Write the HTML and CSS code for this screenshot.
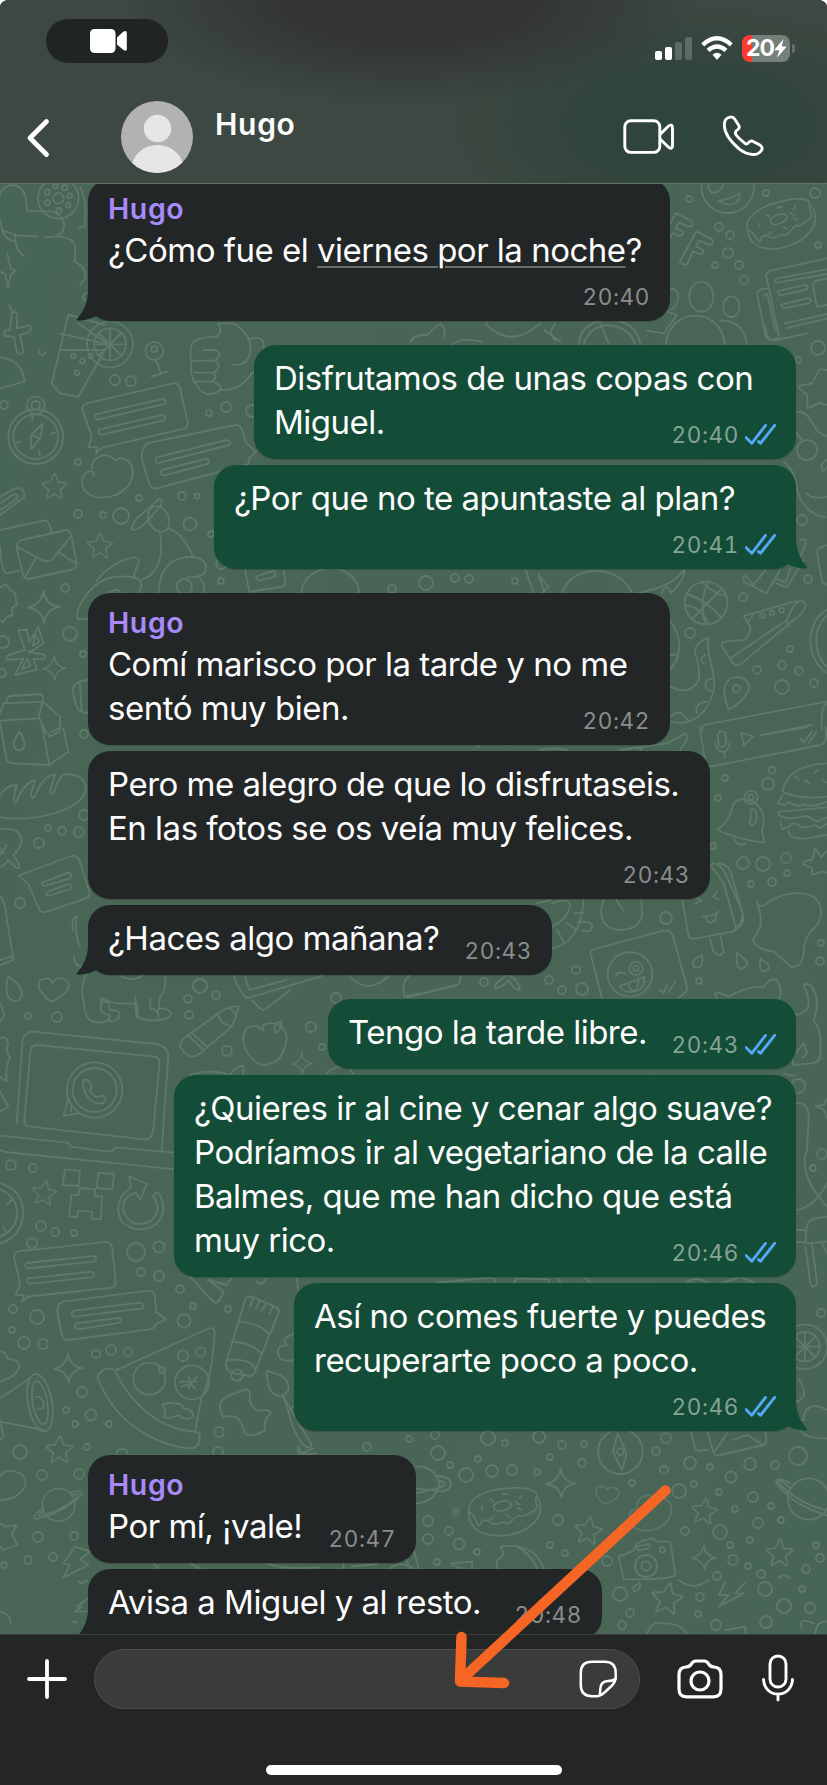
FILE: index.html
```html
<!DOCTYPE html>
<html lang="es">
<head>
<meta charset="utf-8">
<title>Hugo</title>
<link rel="stylesheet" href="styles.css">
</head>
<body>
<svg width="0" height="0" class="defs">
  <symbol id="tail" viewBox="0 0 96 96"><path d="M36 8Q36 52 3 90Q0 95 10 95Q42 93 65 79L80 8Z"/></symbol>
  <symbol id="ticks" viewBox="0 0 92 62"><path d="M3 40L20 57L61 4M40 52L46 57L88 4"/></symbol>
  <symbol id="star" viewBox="-50 -50 100 100"><path d="M0 -44Q3 -46 6 -38L13 -16L42 -12Q46 -10 41 -7L20 11L27 38Q26 42 21 40L0 25L-23 40Q-28 42 -26 35L-19 11L-42 -7Q-45 -12 -39 -13L-14 -16Z"/></symbol>
  <symbol id="spark" viewBox="-50 -50 100 100"><path d="M0 -46Q3 -5 45 0Q5 5 2 44Q-5 7 -44 2Q-6 -7 0 -46Z"/></symbol>
  <symbol id="planet" viewBox="-90 -70 180 140"><circle r="55"/><path d="M-50 12C-90 35 -92 52 -65 46C-20 35 50 0 75 -32C90 -52 55 -48 38 -40M-52 22C-68 32 -73 40 -60 37C-20 28 45 -4 64 -30C70 -40 58 -38 46 -32"/></symbol>
  <symbol id="cloud" viewBox="-80 -70 160 140"><path d="M-48 -20C-55 -55 -5 -75 20 -45C48 -62 80 -35 68 8C52 55 -15 78 -60 52C-90 30 -75 -20 -48 -12Q-38 -8 -45 2"/></symbol>
  <symbol id="heart" viewBox="-50 -50 100 100"><path d="M-7 42Q-45 15 -46 -8C-46 -32 -12 -34 -3 -15C6 -38 48 -34 47 -8Q40 22 -7 42Z"/></symbol>
  <symbol id="donut" viewBox="-120 -85 240 170"><path d="M-110 0C-115 -40 -60 -70 20 -72C80 -76 105 -62 100 -45C88 -28 115 -15 90 0C72 4 65 20 50 14C35 6 22 42 5 36C-10 25 -25 48 -40 36Q-62 15 -76 42C-88 48 -82 15 -110 0ZM-110 0C-115 92 25 90 80 45C115 20 120 -20 100 -45M-70 -15V-5M-42 -38L-34 -30M-5 -54H12M55 -50L48 -40M35 -30L46 -22M-35 18L-44 24M5 10L15 18M52 -5L42 -12"/><ellipse cx="-2" cy="-18" rx="28" ry="15" transform="rotate(-12)"/></symbol>
  <symbol id="chat" viewBox="-170 -100 340 200"><path d="M-155 -52Q-155 -70 -135 -70H125Q145 -70 145 -50V50Q145 70 125 70H-125L-145 85L-138 65L-162 60L-145 30ZM-120 -32H90Q98 -20 88 -15H-118Q-128 -24 -120 -32ZM-120 15H78Q86 27 76 32H-118Q-128 23 -120 15Z"/></symbol>
</svg>

<div class="phone">
  <header class="top">
    <div class="status">
      <div class="pill"><svg width="38" height="26" viewBox="0 0 38 26" fill="#fff"><rect x="1" y="1" width="25.5" height="24" rx="4.5"/><path d="M28 9.5L34.5 3.6Q37.8 2 37.8 5V21Q37.8 24 34.5 22L28 16.5Z"/></svg></div>
      <div class="signals">
        <svg width="38" height="26" viewBox="0 0 38 26" fill="#fff"><rect x="1" y="16" width="7" height="9" rx="2"/><rect x="11" y="12" width="7" height="13" rx="2"/><g opacity=".2"><rect x="21" y="7" width="7" height="18" rx="2"/><rect x="31" y="2" width="7" height="23" rx="2"/></g></svg>
        <svg class="wifi" width="32" height="26" viewBox="0 0 32 26" fill="none" stroke="#fff" stroke-width="4.3"><path d="M1.7 9.8Q16 -3.2 30.3 9.8M7 15.4Q16 7.4 25 15.4"/><path d="M11.5 19.7Q16 16 20.5 19.7L16.6 24.3Q16 25 15.4 24.3Z" fill="#fff" stroke="none"/></svg>
        <div class="battery"><span>20</span><svg width="13" height="19" viewBox="0 0 13 19" fill="#fff"><path d="M9.5 0L.7 10.5Q.3 11.3 1.2 11.3H5.3L3 18.7L12.2 8.2Q12.6 7.4 11.7 7.4H7.7Z"/></svg></div>
        <i class="cap"></i>
      </div>
    </div>
    <div class="nav">
      <svg class="back" width="26" height="42" viewBox="0 0 26 42"><path d="M22.5 4.5L6 21L22.5 37.5"/></svg>
      <svg class="avatar" width="72" height="72" viewBox="0 0 72 72"><clipPath id="face"><circle cx="36" cy="36" r="36"/></clipPath><g clip-path="url(#face)"><rect width="72" height="72" fill="#b2b2b2"/><circle cx="36.5" cy="27.5" r="13.7" fill="#e6e6e6"/><ellipse cx="36.5" cy="68" rx="26" ry="24" fill="#e6e6e6"/></g></svg>
      <h1>Hugo</h1>
      <svg class="video" width="52" height="36" viewBox="0 0 52 36"><rect x="1.8" y="1.8" width="35" height="31.6" rx="6"/><path d="M37 15.5L45.3 7.2Q49.5 4.3 49.5 9V27Q49.5 31 45.3 28L37 20"/></svg>
      <svg class="call" width="42" height="42" viewBox="947 348 126 126"><path d="M957 363C963 354 979 350 985 360L998 380Q1001 387 994 392Q986 397 987 404Q992 414 1017 434Q1023 437 1027 430Q1034 423 1042 428L1062 439Q1072 447 1064 456C1052 473 1023 468 1001 452C977 432 955 405 954 380Q954 369 957 363Z"/></svg>
    </div>
  </header>

  <main class="chat">
    <svg class="wallpaper" width="827" height="1451" viewBox="0 183 827 1451">
      <g class="dots">
        <circle cx="689" cy="199" r="3"/><circle cx="766" cy="193" r="3"/><circle cx="815" cy="193" r="5"/><circle cx="719" cy="227" r="4"/><circle cx="730" cy="235" r="4"/><circle cx="728" cy="253" r="5"/><circle cx="715" cy="265" r="3"/><circle cx="739" cy="265" r="4"/><circle cx="744" cy="280" r="4"/><circle cx="818" cy="245" r="3"/>
        <circle cx="115" cy="380" r="5"/><circle cx="131" cy="381" r="5"/><circle cx="4" cy="405" r="4"/><circle cx="226" cy="407" r="5"/><circle cx="209" cy="413" r="3"/><circle cx="252" cy="411" r="6"/><circle cx="78" cy="462" r="3"/><circle cx="139" cy="498" r="3"/><circle cx="182" cy="496" r="4"/><circle cx="197" cy="496" r="2.5"/><circle cx="78" cy="514" r="4"/><circle cx="103" cy="515" r="3"/><circle cx="121" cy="516" r="8"/><circle cx="190" cy="524" r="6.5"/><circle cx="211" cy="534" r="3"/><circle cx="65" cy="588" r="4"/><circle cx="221" cy="581" r="3"/><circle cx="221" cy="564" r="5"/><circle cx="70" cy="634" r="7"/><circle cx="3" cy="642" r="6"/><circle cx="83" cy="654" r="3"/><circle cx="2" cy="673" r="4"/><circle cx="392" cy="589" r="4"/>
        <circle cx="818" cy="348" r="7"/><circle cx="798" cy="360" r="3"/><circle cx="807" cy="450" r="10"/><circle cx="802" cy="520" r="5"/><circle cx="426" cy="583" r="7"/><circle cx="455" cy="578" r="4"/><circle cx="469" cy="579" r="4"/><circle cx="515" cy="581" r="3"/><circle cx="743" cy="597" r="4"/><circle cx="808" cy="579" r="4"/><circle cx="690" cy="633" r="5"/><circle cx="790" cy="649" r="3"/><circle cx="757" cy="670" r="4"/><circle cx="782" cy="665" r="4"/><circle cx="799" cy="671" r="4"/><circle cx="782" cy="687" r="7"/><circle cx="814" cy="683" r="4"/>
        <circle cx="84" cy="734" r="4"/><circle cx="84" cy="815" r="5"/><circle cx="48" cy="828" r="3"/><circle cx="62" cy="831" r="4"/><circle cx="79" cy="832" r="5"/><circle cx="39" cy="843" r="5"/><circle cx="20" cy="903" r="5"/><circle cx="200" cy="986" r="7"/><circle cx="188" cy="999" r="4"/><circle cx="216" cy="995" r="4"/><circle cx="189" cy="1015" r="4"/><circle cx="28" cy="1016" r="3"/><circle cx="57" cy="1017" r="5"/><circle cx="311" cy="1027" r="5"/><circle cx="336" cy="998" r="5"/><circle cx="227" cy="1051" r="5"/><circle cx="322" cy="1047" r="3"/>
        <circle cx="725" cy="778" r="3"/><circle cx="772" cy="770" r="3.5"/><circle cx="768" cy="784" r="6"/><circle cx="718" cy="798" r="3"/><circle cx="713" cy="846" r="3"/><circle cx="743" cy="863" r="6"/><circle cx="763" cy="864" r="7"/><circle cx="786" cy="858" r="5"/><circle cx="751" cy="884" r="3"/><circle cx="772" cy="882" r="4"/><circle cx="787" cy="873" r="3"/><circle cx="666" cy="918" r="6"/><circle cx="576" cy="970" r="4"/><circle cx="549" cy="980" r="4"/><circle cx="562" cy="990" r="4"/><circle cx="582" cy="989" r="6"/><circle cx="484" cy="982" r="4"/><circle cx="699" cy="981" r="3"/><circle cx="821" cy="943" r="3"/><circle cx="820" cy="961" r="4"/><circle cx="798" cy="1086" r="7"/>
        <circle cx="11" cy="1165" r="5"/><circle cx="33" cy="1168" r="4"/><circle cx="41" cy="1226" r="5"/><circle cx="55" cy="1232" r="4"/><circle cx="74" cy="1233" r="3"/><circle cx="32" cy="1243" r="5"/><circle cx="136" cy="1252" r="9"/><circle cx="159" cy="1247" r="5.5"/><circle cx="141" cy="1272" r="4"/><circle cx="159" cy="1276" r="5"/><circle cx="180" cy="1289" r="4"/><circle cx="193" cy="1306" r="3"/><circle cx="184" cy="1321" r="6.5"/><circle cx="228" cy="1309" r="3"/><circle cx="13" cy="1309" r="4"/><circle cx="37" cy="1317" r="7"/><circle cx="12" cy="1330" r="3"/><circle cx="24" cy="1343" r="6"/><circle cx="43" cy="1344" r="5"/><circle cx="96" cy="1354" r="4"/><circle cx="111" cy="1350" r="5"/><circle cx="128" cy="1352" r="4"/><circle cx="82" cy="1392" r="5"/><circle cx="66" cy="1410" r="3"/><circle cx="91" cy="1415" r="5.5"/><circle cx="75" cy="1424" r="3"/><circle cx="109" cy="1424" r="3"/><circle cx="219" cy="1432" r="5"/><circle cx="822" cy="1154" r="5"/><circle cx="813" cy="1168" r="3"/><circle cx="821" cy="1313" r="4"/>
        <circle cx="488" cy="1438" r="7"/><circle cx="539" cy="1437" r="6"/><circle cx="435" cy="1435" r="4"/><circle cx="505" cy="1443" r="3"/><circle cx="666" cy="1438" r="5"/><circle cx="20" cy="1452" r="7"/><circle cx="87" cy="1447" r="3"/><circle cx="42" cy="1475" r="5"/><circle cx="79" cy="1474" r="5"/><circle cx="38" cy="1537" r="5"/><circle cx="74" cy="1536" r="4"/><circle cx="28" cy="1560" r="4"/><circle cx="53" cy="1557" r="4"/><circle cx="4" cy="1565" r="3"/><circle cx="367" cy="1447" r="4"/><circle cx="409" cy="1439" r="3"/><circle cx="218" cy="1452" r="5"/><circle cx="122" cy="1455" r="6"/>
        <circle cx="562" cy="1445" r="4"/><circle cx="584" cy="1444" r="3"/><circle cx="438" cy="1453" r="7"/><circle cx="550" cy="1457" r="3"/><circle cx="450" cy="1465" r="3"/><circle cx="478" cy="1459" r="3"/><circle cx="466" cy="1475" r="7"/><circle cx="492" cy="1471" r="6"/><circle cx="512" cy="1470" r="5"/><circle cx="537" cy="1472" r="3"/><circle cx="582" cy="1463" r="4"/><circle cx="656" cy="1451" r="4"/><circle cx="664" cy="1470" r="4"/><circle cx="690" cy="1463" r="6"/><circle cx="710" cy="1467" r="3"/><circle cx="750" cy="1464" r="6"/><circle cx="775" cy="1465" r="4"/><circle cx="798" cy="1456" r="9"/><circle cx="731" cy="1477" r="5.5"/><circle cx="632" cy="1483" r="3"/><circle cx="679" cy="1491" r="7"/><circle cx="694" cy="1484" r="3"/><circle cx="719" cy="1492" r="3"/><circle cx="753" cy="1497" r="5"/><circle cx="735" cy="1509" r="3"/><circle cx="771" cy="1506" r="3"/><circle cx="758" cy="1523" r="5"/><circle cx="781" cy="1520" r="3"/><circle cx="456" cy="1512" r="2.5"/><circle cx="428" cy="1521" r="5"/><circle cx="449" cy="1531" r="4"/><circle cx="428" cy="1539" r="5"/><circle cx="459" cy="1544" r="5.5"/><circle cx="558" cy="1520" r="5"/><circle cx="477" cy="1552" r="3"/><circle cx="437" cy="1562" r="3"/><circle cx="550" cy="1545" r="3"/><circle cx="565" cy="1553" r="3"/><circle cx="607" cy="1561" r="5"/><circle cx="685" cy="1531" r="4"/><circle cx="720" cy="1532" r="7"/><circle cx="730" cy="1545" r="3"/><circle cx="750" cy="1540" r="3"/><circle cx="733" cy="1560" r="5"/><circle cx="748" cy="1566" r="3"/><circle cx="717" cy="1576" r="4"/><circle cx="761" cy="1574" r="4"/><circle cx="816" cy="1545" r="3"/><circle cx="820" cy="1558" r="4"/><circle cx="806" cy="1569" r="4"/><circle cx="620" cy="1594" r="7"/><circle cx="765" cy="1589" r="7"/><circle cx="802" cy="1589" r="3"/><circle cx="700" cy="1597" r="4"/><circle cx="784" cy="1606" r="7"/><circle cx="810" cy="1608" r="5"/><circle cx="698" cy="1614" r="3"/><circle cx="630" cy="1613" r="4"/><circle cx="622" cy="1625" r="4"/><circle cx="716" cy="1625" r="5"/><circle cx="766" cy="1622" r="6"/>
      </g>
      <g transform="scale(.33333)">
        <circle cx="175" cy="595" r="61"/><circle cx="175" cy="595" r="16"/><circle cx="142" cy="577" r="8"/><circle cx="166" cy="559" r="7"/><circle cx="194" cy="563" r="8"/><circle cx="209" cy="587" r="7"/><circle cx="205" cy="616" r="7"/><circle cx="177" cy="632" r="8"/><circle cx="142" cy="608" r="8"/>
        <path d="M0 585C10 545 70 540 78 600L82 632L165 635M168 640Q200 660 190 690Q175 715 135 711M110 709L50 706L5 690M0 660Q10 725 45 722M46 706Q45 755 72 768M170 709Q230 710 226 755L224 785Q260 800 256 835L240 855M240 560Q262 600 254 680L235 683M260 880Q240 885 254 900M28 915Q32 935 44 933M22 760L32 805L47 812L33 822L24 862L15 822L0 815"/>
      </g>
      <g transform="translate(407 0) scale(.33333)">
        <circle cx="962" cy="560" r="79"/><path d="M935 602Q970 598 998 580Q1000 610 970 614Q945 612 935 602ZM905 550Q900 580 925 578Q945 570 950 552"/>
        <use href="#donut" x="1010" y="588" width="225" height="170" transform="rotate(-10 1120 670)"/>
        <path id="ef" d="M868 694L915 718Q920 725 914 734L904 734L876 722L867 740L890 750Q890 762 878 762L858 754L842 790Q836 800 818 786Z"/><use href="#ef" x="-61" y="-55"/>
        <ellipse cx="883" cy="890" rx="36" ry="45"/><ellipse cx="973" cy="920" rx="25" ry="31"/><circle cx="865" cy="1035" r="88"/><path d="M790 865Q820 870 813 900Q805 925 792 928M780 935L810 945L770 1000L720 992M940 962Q1010 960 1020 1035M1260 775L1090 812Q1072 818 1080 838L1118 1018M1260 808L1110 835Q1095 845 1110 848L1260 822M1112 874L1196 854Q1208 862 1195 870L1118 886ZM1122 914L1206 894Q1218 902 1205 910L1128 926ZM1134 970L1260 942M1140 984L1260 956M1260 836L1225 843Q1215 850 1220 870L1230 920L1260 915M1080 866Q1045 865 1052 890L1075 1005Q1085 1030 1110 1015M1070 888Q1080 870 1085 900L1105 990"/>
      </g>
      <g transform="translate(0 330) scale(.33333)">
        <path d="M35 -50Q50 -60 52 -45L50 -5L88 -14Q98 0 85 7L60 15L70 65Q60 80 50 65L42 20L15 18Q5 0 30 0ZM115 58Q115 75 130 76L138 66M0 82Q68 90 74 155L0 175M205 -45L155 160L180 190L235 200L315 60L185 60M180 10L325 43L235 -20M208 -45L315 -15"/><circle cx="330" cy="43" r="69"/><circle cx="330" cy="43" r="48"/><path d="M330 -5V91M282 43H378M296 9L364 77M364 9L296 77"/><circle cx="220" cy="79" r="7"/><circle cx="247" cy="93" r="7"/><circle cx="272" cy="79" r="7"/><circle cx="231" cy="128" r="7"/>
        <circle cx="463" cy="63" r="27"/><circle cx="463" cy="57" r="9"/><path d="M468 91L483 130M455 140L502 125M610 60H650Q668 75 645 92Q670 110 640 128Q655 145 635 155Q670 165 660 180Q630 205 600 180L580 150Q570 120 575 100Q565 60 580 35Q610 20 650 20Q670 5 655 -20L700 -20Q770 25 745 85Q730 110 698 103M580 92H645M585 128H640M585 155H635M660 180Q720 185 755 130M745 30Q800 10 790 60L760 130"/>
        <circle cx="107" cy="320" r="82"/><circle cx="107" cy="320" r="67"/><circle cx="107" cy="226" r="27"/><circle cx="107" cy="226" r="13"/><path d="M128 282L93 315V358L120 325ZM93 315L120 325M97 260V272M120 378L118 364M48 338L62 334M165 308L152 312"/>
        <use href="#chat" x="235" y="157" width="350" height="200" transform="rotate(-13 410 257)"/>
        <path d="M440 340L705 285Q722 282 728 305L738 338L768 366L748 382L745 402L470 475Q455 478 448 462L425 385Q425 355 440 340ZM470 382L680 330Q695 335 688 345L480 398Q462 400 470 382ZM485 420L620 386Q632 392 622 402L495 436Q478 438 485 420Z"/>
        <use href="#cloud" x="243" y="365" width="165" height="145"/><use href="#star" x="119" y="427" width="88" height="86"/><use href="#star" x="257" y="605" width="85" height="85"/>
        <path d="M0 500L45 475Q78 470 72 502L0 555M0 520L40 493Q58 490 50 507L0 540M0 600L130 572Q150 570 155 610M0 650Q5 725 20 730L58 722M65 630L200 600Q212 602 215 620L230 700Q230 718 210 720L85 747Q70 745 68 730L50 655Q50 635 65 630ZM52 650L125 690Q140 697 155 690L212 620M75 742L107 685M228 700L178 668M395 590L410 565L480 505Q492 510 480 530L440 575Q420 595 405 600Q395 600 395 590ZM480 612Q495 700 445 740L418 752M505 595Q550 610 578 678M475 790Q480 700 540 685Q610 670 618 710Q620 745 560 742M290 752Q340 690 405 682Q425 685 410 710L400 745M418 788Q440 740 380 740Q290 730 240 825Q225 860 235 868L265 865M320 790Q360 770 360 790M600 745Q620 770 610 790"/><ellipse cx="476" cy="567" rx="30" ry="40" transform="rotate(-25 476 567)"/><circle cx="553" cy="770" r="23"/>
        <use href="#spark" x="76" y="775" width="110" height="112"/><use href="#spark" x="122" y="975" width="82" height="80"/>
        <path d="M0 772L18 762L30 780L45 790L50 825L35 835L38 855L20 860L10 877L0 870M55 900L80 900L88 935L115 892L130 940L100 960L85 965L135 975Q138 990 120 988L100 985L110 1018L45 1035L70 985L20 990Q15 975 35 972L75 960ZM105 915L118 935L98 948ZM82 985L92 1008L65 1018ZM735 720L748 785L848 770Q860 765 855 750L852 722M768 740L820 722Q830 730 825 740L775 752ZM903 790C915 690 1070 690 1078 790M20 1120V1105L30 1098L125 1092Q130 1100 128 1115L10 1120L0 1150M128 1115L180 1160V1200M128 1115L115 1165L0 1172M118 1165L140 1210M264 1050Q215 1055 218 1085L230 1130Q240 1150 264 1148M240 1060L245 1145"/>
      </g>
      <g transform="translate(407 330) scale(.33333)">
        <path d="M10 35Q25 10 60 15L100 -20Q120 0 110 20M135 45Q155 20 225 35M235 -20Q310 60 400 -20M515 45Q520 -25 600 -30Q690 -30 700 45M530 45Q545 -10 600 -15Q670 -10 685 45M575 -30L605 40M412 0L460 35M445 -20Q420 10 445 30M1075 -10Q1080 40 1110 30L1200 10M1260 120L1237 118L1215 160L1175 168Q1180 185 1200 192L1202 235L1240 218L1260 225M1167 245C1220 240 1210 310 1260 318M1170 310L1185 330M1130 395Q1165 420 1170 480Q1190 550 1255 562M1260 410Q1240 440 1245 400L1260 388M1200 490Q1215 510 1260 500M1180 630Q1200 620 1195 645L1180 680M1260 645L1235 655Q1228 660 1232 680L1245 755L1260 765M1015 735L1040 765L1075 720M1010 740L1010 755L1078 790L1120 720M1108 760L1140 772L1190 690M1108 745L1135 758L1150 715"/>
        <circle cx="897" cy="819" r="64"/><path d="M840 792Q900 810 945 865M945 775Q900 820 855 868M905 755Q875 810 895 883M835 825Q880 830 905 883M885 757Q920 790 960 800"/>
        <path d="M1010 858L1150 818Q1190 805 1197 825Q1190 850 1160 870L1000 1003Q990 1010 980 1002L945 950Q940 938 955 935L1010 930Q1030 920 1030 890ZM970 985L1140 870Q1160 820 1175 815M1020 880L1040 852M1138 872L1148 890"/><circle cx="1066" cy="857" r="7"/><circle cx="1095" cy="849" r="7"/><circle cx="1124" cy="841" r="7"/>
        <path d="M1260 838Q1210 870 1210 935Q1215 1000 1260 1030M1260 855Q1225 890 1228 935Q1232 990 1260 1010M790 875C830 920 820 990 790 1015M790 975Q820 970 810 990L790 1020M790 1070Q850 1100 875 1050Q880 1020 865 970Q860 940 905 922C890 1000 960 1050 890 1145Q850 1190 790 1175M792 1160Q820 1130 845 1175M870 1150Q860 1120 900 1115M918 1085Q885 1080 900 1050L915 1045M892 1000Q870 990 895 975"/>
        <path d="M965 1138Q945 1090 955 1065C975 1020 1040 1045 1023 1085Q1005 1120 965 1138Z"/><circle cx="988" cy="1076" r="11"/>
        <path d="M355 718L380 790M395 735L425 770L380 815M395 735L412 785M465 790C490 700 640 700 675 790M690 790Q800 770 832 718Q835 750 790 790M765 790Q775 755 790 785M885 1200Q885 1185 900 1183L1260 1115M1065 1215L1215 1185M1245 1200Q1240 1130 1260 1120"/>
      </g>
      <g transform="translate(0 730) scale(.33333)">
        <path d="M0 -20L20 90Q25 100 40 100L148 105L205 65L190 -5M148 105L125 -20M148 20Q145 10 155 5L178 -5M148 20L178 5M58 5C45 25 38 40 42 50C52 70 78 60 73 38Q70 18 58 5ZM0 195Q20 165 50 165L40 210Q45 225 52 210Q70 160 105 150L92 195Q98 210 105 198Q130 135 165 133L150 185Q155 200 162 185Q175 145 190 133Q255 130 257 175C255 240 100 280 0 262M0 298Q60 290 65 330Q60 360 40 375L58 405Q60 420 45 410L25 390Q10 410 0 410M20 345L0 375M0 355L12 370M55 437L85 462L118 540Q125 550 140 545L258 505Q272 498 268 485L238 390Q230 375 215 378ZM125 458L205 428Q220 430 210 445L135 468Q125 468 125 458ZM138 488L205 462Q220 465 210 477L145 498Q138 498 138 488ZM0 500Q12 510 15 530L40 690L0 705M38 680L0 690"/>
        <path d="M25 740Q15 770 22 795C35 820 65 820 66 790Q60 760 25 740ZM0 820Q15 850 12 860L0 875M230 560Q215 560 218 600M228 560Q225 620 240 650M222 680Q225 710 245 710M258 735Q240 780 250 810Q255 870 280 875Q325 885 330 855Q315 855 302 840L305 805Q340 825 405 820L410 860Q450 880 500 865Q525 850 500 838Q485 830 475 840L480 800Q500 780 495 735M302 815Q330 810 328 840Q370 840 355 865Q340 880 325 870M405 800L415 855M450 805L452 835Q480 840 475 865M358 735Q395 760 430 735"/>
        <use href="#heart" x="108" y="725" width="105" height="98" transform="rotate(2 160 774)"/>
        <path d="M545 930L655 850Q690 825 715 830Q710 860 695 890L600 970Q585 985 560 975L540 950ZM655 850Q658 885 695 888M563 915L610 960M575 908L620 950M690 835L708 855M700 735Q720 790 740 805L960 740L970 735M735 740L748 780L860 750M755 810L780 835Q790 845 800 835L870 780M1045 735Q1100 800 1170 735M1230 735Q1200 760 1215 800L1260 790"/>
        <path d="M790 885C820 870 870 890 858 940C850 975 830 1000 810 1000Q790 1010 770 998C730 970 720 920 740 895Q765 880 790 900ZM828 910Q815 880 845 875Q845 900 828 910Z"/><use href="#spark" x="870" y="965" width="72" height="72"/>
        <path d="M50 1180L68 930Q75 905 100 905L470 942Q505 950 505 980L485 1260M72 1180L92 960Q95 945 110 945L465 980Q480 985 478 1000L460 1200Q455 1230 435 1228L90 1190Q72 1190 75 1170"/><circle cx="284" cy="1080" r="83"/><circle cx="284" cy="1080" r="66"/><path d="M205 1108L190 1158L235 1150M215 1125L212 1145"/><path d="M250 1050Q262 1042 275 1070L270 1082Q280 1100 292 1102Q305 1090 318 1105Q315 1125 290 1120Q245 1100 250 1050ZM0 925Q20 915 25 940Q15 960 30 985Q15 1010 20 1055L0 1040M0 1085L25 1130L0 1145M570 1035Q630 1015 690 1035Q710 1005 730 1008L730 1032M980 1030Q1030 990 1060 1030"/>
      </g>
      <g transform="translate(407 730) scale(.33333)">
        <path d="M210 50Q240 30 300 45M400 60Q440 50 480 60M640 60L780 40L835 10Q850 20 820 60M700 60L730 30M878 -10L895 100Q900 112 920 108L1240 45Q1258 40 1258 15L1255 -10M1062 15L1200 -8M1003 8L1040 20L1010 45ZM1180 25L1190 38L1215 5M1205 38L1228 5M932 15Q940 -5 955 10L958 40Q945 60 935 45ZM925 40Q930 70 955 65Q970 50 968 35M950 68L954 82"/>
        <path d="M930 300Q970 270 975 235Q985 200 1020 210C1060 215 1080 260 1065 300L1072 338Q1000 330 930 300ZM980 325Q990 350 1015 340M1030 240Q1045 230 1050 260Q1045 285 1035 288Q1022 280 1032 265Z"/><circle cx="1032" cy="202" r="20"/><circle cx="1032" cy="202" r="8"/>
        <path d="M1260 100Q1140 105 1127 185Q1180 210 1260 200M1127 195L1112 220Q1140 230 1145 215Q1170 235 1190 222Q1210 235 1260 215M1115 245L1260 232M1115 245Q1105 260 1150 265L1200 258L1230 275L1260 262M1120 275L1125 298L1145 290Q1160 270 1180 290Q1200 295 1225 285L1240 295L1260 280M1145 300Q1145 330 1200 325L1260 315M1165 140L1175 150M1195 150L1210 162M1222 130L1232 120M1245 150L1258 158"/>
        <path d="M1260 362L1242 382L1225 355L1215 390Q1190 390 1188 402L1215 415V435L1245 425L1260 428M825 505L845 620Q850 628 870 625L975 605Q990 600 985 585L950 460L910 405M915 400Q940 400 955 430L1005 540Q1010 585 985 590M935 400Q970 405 975 440L1010 560Q1010 590 975 605M908 625L920 665Q940 685 950 665L940 615M862 498L885 512L865 520M930 485L918 500L935 508M885 560Q920 560 935 545M895 560Q905 590 925 570L928 550M1050 515Q1055 540 1080 520Q1130 485 1180 490C1240 490 1260 550 1225 590Q1190 620 1190 670Q1185 715 1150 710Q1130 690 1100 665Q1050 660 1038 630L1060 590Q1065 560 1050 515ZM590 508C570 560 590 600 640 600Q690 600 705 560L703 508M625 505L648 540M435 655Q520 640 530 510M435 590Q480 570 490 525M390 520L430 510M500 550L530 548M480 580L510 600M450 600L470 635M515 575Q560 575 555 590Q555 610 525 602M435 520Q480 500 490 525"/>
        <path d="M550 670Q550 660 570 655L770 602Q790 600 797 615L840 770Q842 790 815 802M550 670L585 806"/><circle cx="669" cy="733" r="67"/><circle cx="687" cy="715" r="20"/><circle cx="687" cy="715" r="8"/><path d="M625 738Q635 720 655 732M637 768Q680 755 712 740Q715 780 680 785Q650 790 637 768ZM662 762L675 783L690 780L695 750M757 780L770 790L780 765M785 785L805 755M860 710Q850 690 885 675Q890 700 880 710Q870 715 860 710ZM990 668Q985 720 1005 715Q1030 705 1015 690ZM1060 685Q1055 730 1075 723Q1095 715 1080 700ZM265 765Q290 740 300 735Q330 740 340 780Q320 780 305 750Q290 770 265 775ZM0 802L150 765Q162 760 160 740M930 805Q915 785 935 788L965 800Q1030 765 1070 772Q1090 740 1110 750Q1130 790 1115 805M1190 765Q1210 755 1220 780Q1240 820 1220 870Q1245 900 1240 970Q1240 1000 1210 1000L1160 1005Q1150 980 1170 965L1190 940L1200 970L1185 985M1190 765Q1220 830 1190 845Q1175 860 1165 850M1165 1035Q1150 1040 1130 1030"/>
        <path d="M1260 1105L1250 1125L1225 1128L1250 1138L1260 1165M1165 1120Q1205 1115 1205 1160L1200 1260Q1170 1330 1260 1430"/>
      </g>
      <g transform="translate(0 1100) scale(.33333)">
        <path d="M0 107L200 128Q210 130 212 140L325 155Q340 155 345 142L525 158M0 150L15 156L525 208M195 208L240 212L235 258L188 255ZM295 218L342 222L337 268L290 264ZM238 264L285 268L284 288L307 290L302 358L275 356L276 335L235 332L232 352L208 350L214 284L236 285ZM388 228L440 252L420 300L408 278Q365 290 370 330Q390 390 450 365Q490 330 460 290Q465 270 480 285Q505 340 465 375Q410 405 365 365Q335 305 392 262ZM0 250Q70 270 70 340Q65 410 0 430M0 268Q50 290 52 340Q48 390 0 410M20 315L35 300M10 380L20 395"/>
        <use href="#star" x="92" y="238" width="82" height="82" transform="rotate(8 133 279)"/>
        <use href="#chat" x="32" y="408" width="335" height="200" transform="rotate(-6 200 508)"/>
        <path d="M190 605L445 572Q462 572 465 590L468 635L498 658L470 670Q465 685 450 688L205 720Q190 722 185 705L172 635Q172 610 190 605ZM220 632L420 608Q435 612 428 625L225 650Q208 648 220 632ZM228 670L350 654Q368 655 360 668L235 688Q220 685 228 670Z"/>
        <use href="#spark" x="156" y="756" width="98" height="98"/>
        <path d="M345 812L615 690Q645 675 644 700Q635 840 605 890L585 995C480 990 390 910 345 812ZM345 812Q325 795 298 820Q285 830 305 860C350 960 460 1040 575 1045Q605 1040 598 1000L585 995"/><circle cx="448" cy="836" r="48"/><circle cx="576" cy="847" r="51"/><circle cx="486" cy="810" r="10"/><circle cx="549" cy="767" r="16"/><circle cx="602" cy="756" r="14"/><path d="M565 828L572 850L545 860M540 845L590 845M565 865L590 830M570 850L585 865M486 915Q510 905 520 910Q550 910 550 925Q585 930 578 950Q560 965 535 945Q500 960 490 950Q505 935 486 915Z"/>
        <path d="M735 600L678 790Q675 815 705 820L752 828Q765 825 768 805L835 640Q840 625 825 620L755 590Q740 590 735 600ZM718 665Q780 670 805 700M698 725Q760 730 785 762M680 780Q760 775 765 810M760 595L750 620M780 600L768 625M800 608L785 632M820 618L808 640"/><circle cx="711" cy="825" r="17"/>
        <path d="M662 905Q680 885 720 875Q745 860 750 880Q745 920 775 932Q820 925 808 945Q790 960 795 990Q760 1015 735 1000Q730 980 715 955Q700 945 670 950Q655 930 662 905ZM800 812L840 825Q870 840 865 870Q845 900 818 880Q800 860 800 812ZM850 890L935 1035Q930 1050 910 1035Q880 1000 865 935ZM865 935L878 920M885 700Q840 715 860 735Q820 740 840 775Q850 785 885 780M570 530L640 605Q650 612 658 600L672 575L625 540L680 555L697 530M770 545Q790 560 798 535M890 530L895 570M0 755Q20 755 22 775Q60 780 58 800Q50 830 0 845M0 895L90 835M0 965L130 990M0 1020L10 1010L0 960M108 890Q135 890 130 925L115 925"/><ellipse cx="120" cy="908" rx="36" ry="87" transform="rotate(-10 120 908)"/><ellipse cx="120" cy="908" rx="22" ry="65" transform="rotate(-10 120 908)"/>
        <use href="#star" x="132" y="1000" width="92" height="98"/>
      </g>
      <g transform="translate(407 1100) scale(.33333)">
        <path d="M1165 330Q1220 325 1260 250M1260 350L1225 355Q1200 360 1198 390L1195 430L1260 425M1165 390H1195M1165 425L1195 428M1195 440L1210 550Q1218 570 1230 550L1215 430M1245 430L1260 460"/><circle cx="1194" cy="740" r="67"/><circle cx="1194" cy="740" r="44"/><path d="M1194 696V784M1150 740H1238M1163 709L1225 771M1163 771L1225 709M1177 838Q1195 870 1190 890L1167 908M1167 960L1190 960Q1190 920 1225 918Q1245 920 1260 930M1180 990Q1190 1015 1260 1015M90 548L260 532L265 548M320 548L330 535L425 538V548M450 530L460 548M530 530L550 548M840 548Q870 525 900 548M950 548L1000 530L1040 548"/>
        <circle cx="640" cy="1055" r="67"/><path d="M632 1000Q655 1045 658 1065L645 1110L618 1055Z"/><circle cx="640" cy="1055" r="10"/><path d="M850 990L865 1045Q870 1055 885 1052L905 1048M900 990L920 1060Q925 1070 940 1065L1070 1035Q1080 1030 1078 1020L1075 992M920 1060L960 1000M1070 1035L1020 1005L980 1020"/>
      </g>
      <g transform="translate(0 1430) scale(.33333)">
        <path d="M0 140Q15 115 45 125Q85 135 75 170Q50 210 0 210M0 280L15 290L50 285L35 312L52 345L10 360L0 350M225 350L270 365L240 388L265 405L190 442L210 405L190 400ZM0 545Q30 550 32 578M235 455L248 460L260 452M264 505L230 530H245L225 545L264 545M220 575L230 578M895 55L895 75L950 70M895 50L905 70L940 55M460 400L475 415M570 400L600 415M800 400Q850 420 960 412M1030 415V400M1055 410L1130 402M1170 415Q1200 390 1240 415M1215 375L1230 415"/>
        <use href="#planet" x="86" y="162" width="180" height="125"/>
      </g>
      <g transform="translate(407 1430) scale(.33333)">
        <path d="M27 110C70 105 100 140 97 170Q75 220 27 220M27 175L105 185Q130 180 132 160Q130 140 90 138M27 190L100 172Q120 165 110 155L95 153"/>
        <use href="#donut" x="172" y="162" width="240" height="165"/><use href="#spark" x="412" y="110" width="100" height="100"/><use href="#heart" x="560" y="155" width="80" height="75" transform="rotate(10 600 192)"/><use href="#star" x="498" y="256" width="92" height="92" transform="rotate(8 544 302)"/><use href="#cloud" x="655" y="188" width="155" height="120"/><use href="#star" x="849" y="200" width="86" height="86" transform="rotate(8 892 243)"/><use href="#star" x="1070" y="323" width="95" height="92"/><use href="#spark" x="850" y="342" width="82" height="82"/><use href="#star" x="728" y="453" width="105" height="105" transform="rotate(8 780 505)"/>
        <circle cx="1205" cy="207" r="62"/><path d="M1150 175C1100 130 1095 155 1130 185C1170 225 1230 250 1275 260M1150 160C1110 140 1100 145 1120 165C1160 205 1220 235 1275 245"/>
        <path d="M635 380L680 362L690 340Q695 335 735 325L752 335L790 335L805 435Q790 450 650 448ZM690 350L725 342Q735 350 725 355L695 362Z"/><circle cx="717" cy="408" r="33"/><circle cx="717" cy="408" r="14"/><circle cx="766" cy="359" r="8"/>
        <path d="M280 350Q380 335 410 415M330 350Q370 370 390 415M280 350Q300 375 270 390L270 415M135 400L195 395V415M135 405L165 415M955 455L935 495L965 495L935 530L1010 490H985L1018 455M815 450Q860 485 905 450M680 470L697 458Q705 475 685 485Q675 480 680 470ZM720 610Q735 570 770 580Q820 580 840 610M1115 445Q1130 425 1148 445M1185 595Q1170 560 1220 580M1225 610Q1230 570 1260 575M955 600L1015 590V610M20 360L35 415"/>
      </g>
    </svg>

    <article class="msg in w582 tall"><b>Hugo</b><p>¿Cómo fue el <u>viernes por la noche</u>?</p><time>20:40</time><svg class="tail"><use href="#tail"/></svg></article>
    <article class="msg out w542 gap"><p>Disfrutamos de unas copas con<br>Miguel.</p><time>20:40<svg><use href="#ticks"/></svg></time></article>
    <article class="msg out w582 tall"><p>¿Por que no te apuntaste al plan?</p><time>20:41<svg><use href="#ticks"/></svg></time><svg class="tail"><use href="#tail"/></svg></article>
    <article class="msg in w582 gap"><b>Hugo</b><p>Comí marisco por la tarde y no me<br>sentó muy bien.</p><time>20:42</time></article>
    <article class="msg in w622 tall"><p>Pero me alegro de que lo disfrutaseis.<br>En las fotos se os veía muy felices.</p><time>20:43</time></article>
    <article class="msg in w464"><p>¿Haces algo mañana?</p><time>20:43</time><svg class="tail"><use href="#tail"/></svg></article>
    <article class="msg out w468 gap"><p>Tengo la tarde libre.</p><time>20:43<svg><use href="#ticks"/></svg></time></article>
    <article class="msg out w622"><p>¿Quieres ir al cine y cenar algo suave?<br>Podríamos ir al vegetariano de la calle<br>Balmes, que me han dicho que está<br>muy rico.</p><time>20:46<svg><use href="#ticks"/></svg></time></article>
    <article class="msg out w502 tall"><p>Así no comes fuerte y puedes<br>recuperarte poco a poco.</p><time>20:46<svg><use href="#ticks"/></svg></time><svg class="tail"><use href="#tail"/></svg></article>
    <article class="msg in w328 gap"><b>Hugo</b><p>Por mí, ¡vale!</p><time>20:47</time></article>
    <article class="msg in w514"><p>Avisa a Miguel y al resto.</p><time>20:48</time><svg class="tail"><use href="#tail"/></svg></article>
  </main>

  <footer class="composer">
    <div class="bar">
      <svg class="plus" width="42" height="42" viewBox="0 0 42 42"><path d="M21 3V39M3 21H39"/></svg>
      <div class="field"><svg width="38" height="38" viewBox="0 0 38 38"><path d="M18.5 36.2H13Q1.8 36.2 1.8 25V13Q1.8 1.8 13 1.8H25.5Q36.7 1.8 36.7 13V19Q36 22 33 25.5L26 32Q23 35.5 18.5 36.2ZM20.5 35.5Q21.3 33 21.3 29Q21.5 21.5 29 21Q34 21 36 19"/></svg></div>
      <svg class="camera" width="46" height="40" viewBox="0 0 46 40"><path d="M9 8Q12.5 8 14 5.4Q15.8 2 19 2H27Q30.2 2 32 5.4Q33.5 8 37 8Q44 8.5 44 15.5V30Q44 37.8 36.5 37.8H9.5Q2 37.8 2 30V15.5Q2 8.5 9 8Z"/><circle cx="23" cy="22" r="9"/></svg>
      <svg class="mic" width="34" height="48" viewBox="0 0 34 48"><rect x="9" y="2" width="16" height="31" rx="8"/><path d="M2.5 25.5C3.5 45 30.5 45 31.5 25.5M17 40V46"/></svg>
    </div>
    <i class="home"></i>
  </footer>

  <svg class="arrow" width="224" height="210" viewBox="446 1484 224 210"><path d="M665.5 1490.5L462 1679"/><path d="M461.5 1637L460 1681.5L504 1683" /></svg>
</div>
</body>
</html>
```

FILE: styles.css
```css
* { box-sizing: border-box; }
body { margin: 0; background: #fff; font-family: Inter, "Liberation Sans", sans-serif; color: #fcfcfc; }
svg { display: block; flex: none; overflow: visible; }
.defs { position: absolute; }
.phone { position: relative; width: 827px; height: 1785px; overflow: hidden; display: flex; flex-direction: column; border-radius: 9px 9px 0 0 / 7px 7px 0 0; background: #242625; }

.top {
  position: relative; z-index: 1; height: 184px; flex: none; border-bottom: 1px solid #617468;
  background:
    radial-gradient(ellipse 290px 105px at 410px 0, #323333 35%, rgba(50, 51, 50, 0) 100%),
    radial-gradient(ellipse 240px 120px at 690px 125px, #2f443b 35%, rgba(47, 68, 59, 0) 100%),
    #3c4841;
}
.status { display: flex; justify-content: space-between; padding: 19px 32px 0 46px; }
.pill { width: 122px; height: 44px; border-radius: 22px; background: #202523; display: flex; align-items: center; padding: 0 0 1px 43px; }
.signals { display: flex; align-items: center; height: 30px; margin-top: 14px; }
.wifi { margin: 0 9px; }
.battery { width: 48px; height: 27px; border-radius: 8px; background: linear-gradient(90deg, #ff3b30 10px, #748079 10px); display: flex; align-items: center; padding-left: 4px; }
.battery span { width: 28px; font: 700 23px/27px Inter, sans-serif; letter-spacing: -1px; }
.cap { width: 3px; height: 9px; margin-left: 2px; border-radius: 0 4px 4px 0; background: #667069; }
.nav { display: flex; align-items: flex-start; padding: 38px 0 0 24px; }
.back { margin-top: 16px; fill: none; stroke: #fff; stroke-width: 4.8; stroke-linecap: round; stroke-linejoin: round; }
.avatar { margin-left: 71px; }
.nav h1 { width: 408px; margin: 3px 0 0 22px; font-size: 30px; line-height: 40px; font-weight: 600; letter-spacing: .7px; }
.video { margin-top: 18px; }
.call { margin: 14px 0 0 47px; }
.video, .call { fill: none; stroke: #fff; stroke-width: 2.9; stroke-linejoin: round; }
.call { stroke-width: 8.5; }

.chat { position: relative; flex: none; height: 1450px; display: flex; flex-direction: column; overflow: hidden; background: linear-gradient(100deg, #486656, #496556 50%, #486656); }
.wallpaper { position: absolute; left: 0; top: -1px; fill: none; stroke: #5f796b; stroke-width: 5.5; stroke-linejoin: round; stroke-linecap: round; }
.dots { stroke-width: 1.8; }
.msg { position: relative; flex: none; display: grid; margin-top: 6px; padding: 11px 20px 15px; border-radius: 22px; box-shadow: 0 1px 1px rgba(0, 0, 0, .18); }
.msg:first-of-type { margin-top: -5px; }
.msg.gap { margin-top: 24px; }
.msg.tall { padding-bottom: 49px; }
.in { margin-left: 88px; background: #232627; --bubble: #232627; color: #fcfcfc; }
.out { margin-left: auto; margin-right: 31px; background: #144d37; --bubble: #144d37; }
.w328 { width: 328px; }
.w464 { width: 464px; }
.w468 { width: 468px; }
.w502 { width: 502px; }
.w514 { width: 514px; }
.w542 { width: 542px; }
.w582 { width: 582px; }
.w622 { width: 622px; }
.msg b { height: 38px; padding-top: 1px; font-size: 28.5px; line-height: 35px; font-weight: 600; color: #a78bfa; letter-spacing: .6px; }
.msg p { margin: 0; font-size: 33px; line-height: 44px; white-space: nowrap; letter-spacing: -.5px; }
.msg u { text-decoration-color: #696d6d; text-decoration-thickness: 2px; text-underline-offset: 4px; }
.msg time { display: flex; align-self: end; justify-self: end; height: 22px; margin: -22px 0 -2px; font-size: 22.5px; line-height: 22px; letter-spacing: .6px; font-variant-numeric: tabular-nums; color: #8b8d8d; }
.msg.tall time { margin-bottom: -36px; }
.out time { color: #84a395; }
.out time svg { width: 31px; height: 21px; margin: 0 0 0 6px; fill: none; stroke: #53a8f7; stroke-width: 8.5; stroke-linecap: round; stroke-linejoin: round; }
.tail { position: absolute; bottom: 0; left: -12px; width: 32px; height: 32px; fill: var(--bubble); }
.out .tail { left: auto; right: -12px; transform: scaleX(-1); }

.composer { flex: 1; border-top: 1px solid #3b3d3c; background: #242625; display: flex; flex-direction: column; align-items: center; }
.bar { width: 100%; display: flex; align-items: center; padding: 14px 0 0 26px; }
.plus { fill: none; stroke: #fff; stroke-width: 3.8; stroke-linecap: round; }
.field { width: 546px; height: 60px; margin-left: 26px; border: 1px solid #4c4e4d; border-radius: 30px; background: #3a3b3b; display: flex; align-items: center; justify-content: flex-end; padding-right: 22px; }
.field svg, .camera, .mic { fill: none; stroke: #fff; stroke-width: 2.5; stroke-linecap: round; stroke-linejoin: round; }
.camera { margin-left: 37px; stroke-width: 3.2; }
.mic { margin: -3px 0 0 38px; stroke-width: 2.9; }
.home { width: 296px; height: 10px; margin-top: 56px; border-radius: 5px; background: #fff; }
.arrow { position: absolute; z-index: 2; left: 446px; top: 1484px; fill: none; stroke: #f56524; stroke-width: 10.5; stroke-linecap: round; stroke-linejoin: round; }
```
